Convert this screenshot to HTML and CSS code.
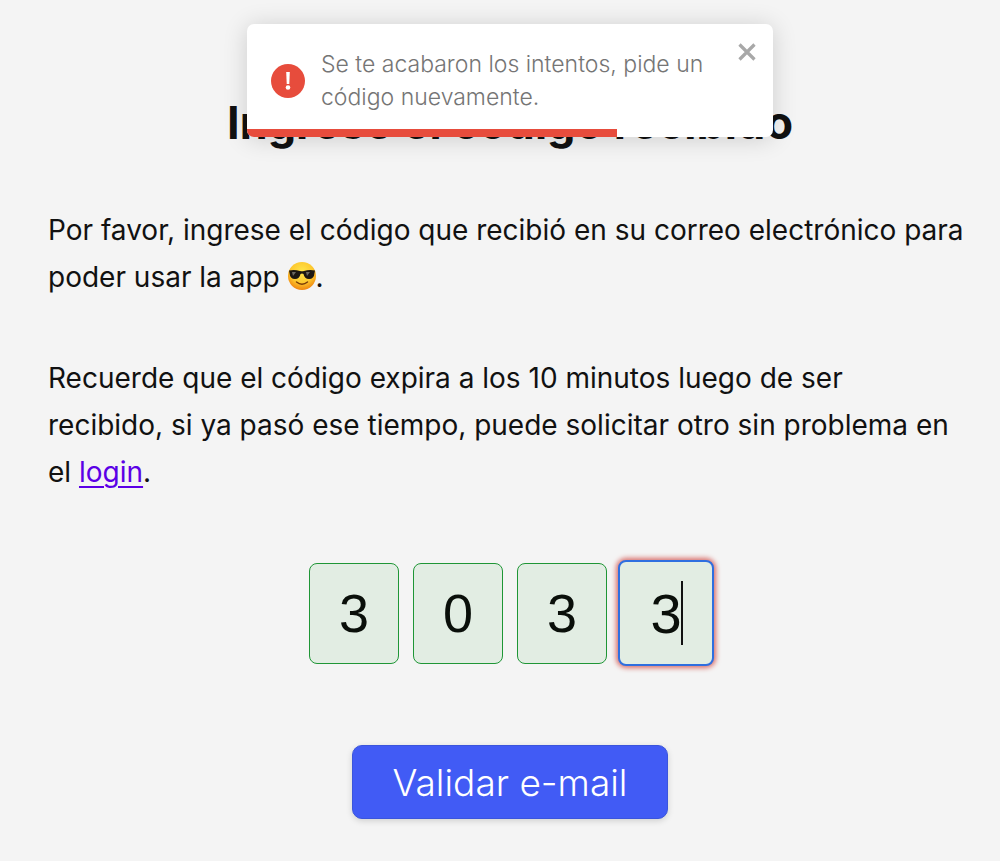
FILE: index.html
```html
<!DOCTYPE html>
<html lang="es">
<head>
<meta charset="utf-8">
<meta name="viewport" content="width=device-width, initial-scale=1">
<title>Validar e-mail</title>
<link rel="stylesheet" href="styles.css">
</head>
<body>
<main class="page">
  <h1 class="title">Ingrese el código recibido</h1>
  <p class="text">Por favor, ingrese el código que recibió en su correo electrónico para poder usar la app <svg class="emoji" viewBox="0 0 28 28" role="img" aria-label="Cara con gafas de sol">
    <defs>
      <radialGradient id="face" cx="50%" cy="35%" r="65%">
        <stop offset="0" stop-color="#ffe64a"/>
        <stop offset="0.6" stop-color="#fdc92f"/>
        <stop offset="1" stop-color="#f0850f"/>
      </radialGradient>
    </defs>
    <circle cx="14" cy="14" r="14" fill="url(#face)"/>
    <path d="M1 8.500Q7 7.500 12 9Q14 9.600 16 9Q21 7.500 27 8.500L26.500 11Q26 17 21 17Q16.500 17 15.500 12Q14 11 12.500 12Q11.500 17 7 17Q2 17 1.500 11Z" fill="#1d1712"/>
    <path d="M4 10L8 10L5 14ZM18 10L22 10L19 14Z" fill="#6d6961"/>
    <path d="M8.500 20Q14 24.500 19.500 20" fill="none" stroke="#7a3d08" stroke-width="1.500" stroke-linecap="round"/>
  </svg>.</p>
  <p class="text">Recuerde que el código expira a los 10 minutos luego de ser<br>recibido, si ya pasó ese tiempo, puede solicitar otro sin problema en el&nbsp;<a class="link" href="#login">login</a>.</p>
  <form class="form">
    <div class="code">
      <input class="digit" type="text" inputmode="numeric" maxlength="1" value="3" aria-label="Dígito 1">
      <input class="digit" type="text" inputmode="numeric" maxlength="1" value="0" aria-label="Dígito 2">
      <input class="digit" type="text" inputmode="numeric" maxlength="1" value="3" aria-label="Dígito 3">
      <span class="active">
        <input class="digit digit-active" type="text" inputmode="numeric" maxlength="1" value="3" aria-label="Dígito 4">
        <span class="caret"></span>
      </span>
    </div>
    <button class="submit" type="button">Validar e-mail</button>
  </form>
</main>
<div class="toast-layer">
  <div class="toast" role="alert">
    <svg class="toast-icon" viewBox="0 0 34 34" aria-hidden="true">
      <circle cx="17" cy="17" r="17" fill="#e74c3c"/>
      <path d="M15.200 8H18.800L18.300 20H15.700Z" fill="#fff"/>
      <circle cx="17" cy="23.500" r="2.300" fill="#fff"/>
    </svg>
    <div class="toast-text">Se te acabaron los intentos, pide un código nuevamente.</div>
    <button class="toast-close" type="button" aria-label="Cerrar">
      <svg class="close-icon" viewBox="0 0 18 18" aria-hidden="true"><path d="M1.500 1.500L16.500 16.500M16.500 1.500L1.500 16.500" stroke="#a8a8a8" stroke-width="3.200"/></svg>
    </button>
    <div class="toast-progress"></div>
  </div>
</div>
</body>
</html>
```
FILE: styles.css
```css
* { box-sizing: border-box; }

body {
  margin: 0;
  background: #f4f4f4;
  color: #111;
  font-family: Inter, "Open Sans", sans-serif;
}

.page {
  padding: 95px 28px 43px 48px;
}

.title {
  margin: 0 0 56px;
  font-size: 45px;
  line-height: 56px;
  font-weight: 700;
  text-align: center;
}

.text {
  margin: 0 0 54px;
  font-size: 28px;
  line-height: 47px;
}

.emoji {
  width: 28px;
  height: 28px;
  vertical-align: -3px;
}

.link {
  color: #5b00e6;
  text-decoration-thickness: 2px;
  text-underline-offset: 4px;
}

.form {
  display: flex;
  flex-direction: column;
  align-items: center;
  gap: 79px;
  padding-top: 10px;
}

.code {
  display: flex;
  align-items: center;
  gap: 14px;
}

.digit {
  display: block;
  width: 90px;
  height: 101px;
  padding: 0;
  border: 1px solid #1f9636;
  border-radius: 8px;
  background: #e2ede3;
  color: #0a0f0a;
  font-family: "Liberation Sans", Arial, sans-serif;
  font-size: 54px;
  text-align: center;
  outline: none;
}

.active {
  position: relative;
  margin: 0 -3px;
}

.digit-active {
  width: 96px;
  height: 106px;
  border: 2px solid #2f6fe0;
  font-size: 56px;
  box-shadow: 0 0 5px 2px #d9706c;
}

.caret {
  position: absolute;
  top: 21px;
  left: 63px;
  width: 2px;
  height: 64px;
  background: #111;
}

.submit {
  min-height: 74px;
  padding: 0 39px;
  border: 1px solid #3a55dc;
  border-radius: 10px;
  background: #415bf5;
  box-shadow: 0 2px 6px rgba(0, 0, 0, 0.15);
  color: #fff;
  font-family: inherit;
  font-size: 37px;
  font-weight: 300;
}

.toast-layer {
  position: absolute;
  top: 24px;
  left: 48px;
  right: 28px;
  display: flex;
  justify-content: center;
}

.toast {
  position: relative;
  display: flex;
  align-items: center;
  gap: 16px;
  width: 526px;
  max-width: 100%;
  padding: 24px 24px 23px;
  border-radius: 7px;
  overflow: hidden;
  background: #fff;
  box-shadow: 0 2px 24px rgba(0, 0, 0, 0.16);
  color: #757575;
}

.toast-icon {
  flex: none;
  width: 34px;
  height: 34px;
}

.toast-text {
  flex: 1;
  font-size: 23px;
  line-height: 33px;
  font-weight: 300;
}

.toast-close {
  align-self: flex-start;
  width: 18px;
  margin: -5px -7px 0 0;
  padding: 0;
  border: 0;
  background: none;
}

.close-icon {
  display: block;
  width: 18px;
  height: 18px;
}

.toast-progress {
  position: absolute;
  left: 0;
  bottom: 0;
  width: 370px;
  height: 8px;
  background: #e74c3c;
}
```
